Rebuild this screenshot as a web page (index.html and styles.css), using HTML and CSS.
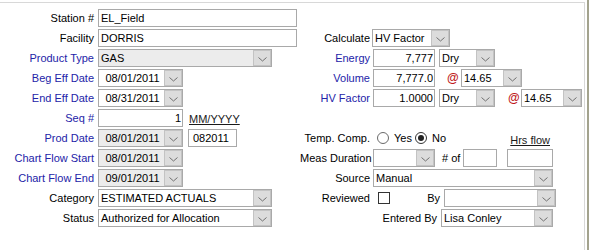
FILE: index.html
```html
<!DOCTYPE html>
<html>
<head>
<meta charset="utf-8">
<link rel="stylesheet" href="styles.css">
</head>
<body>
<div class="frame">
  <div class="panel">
    <div class="col left">
      <div class="row"><span class="lbl">Station #</span><div class="inp w199">EL_Field</div></div>
      <div class="row"><span class="lbl">Facility</span><div class="inp w199">DORRIS</div></div>
      <div class="row"><span class="lbl blue">Product Type</span><div class="sel w174 dis"><span class="val">GAS</span><span class="btn"><svg width="9" height="5" viewBox="0 0 9 5"><polyline points="0.5,0.5 4.5,4 8.5,0.5" fill="none" stroke="#707070"/></svg></span></div></div>
      <div class="row"><span class="lbl blue">Beg Eff Date</span><div class="sel w85 date"><span class="val">08/01/2011</span><span class="btn"><svg width="9" height="5" viewBox="0 0 9 5"><polyline points="0.5,0.5 4.5,4 8.5,0.5" fill="none" stroke="#707070"/></svg></span></div></div>
      <div class="row"><span class="lbl blue">End Eff Date</span><div class="sel w85 date"><span class="val">08/31/2011</span><span class="btn"><svg width="9" height="5" viewBox="0 0 9 5"><polyline points="0.5,0.5 4.5,4 8.5,0.5" fill="none" stroke="#707070"/></svg></span></div></div>
      <div class="row"><span class="lbl blue">Seq #</span><div class="inp w85 num">1</div><span class="ulink mm">MM/YYYY</span></div>
      <div class="row"><span class="lbl blue">Prod Date</span><div class="sel w85 date dis"><span class="val">08/01/2011</span><span class="btn"><svg width="9" height="5" viewBox="0 0 9 5"><polyline points="0.5,0.5 4.5,4 8.5,0.5" fill="none" stroke="#707070"/></svg></span></div><div class="inp w49 ml5 pad5">082011</div></div>
      <div class="row"><span class="lbl blue">Chart Flow Start</span><div class="sel w85 date dis"><span class="val">08/01/2011</span><span class="btn"><svg width="9" height="5" viewBox="0 0 9 5"><polyline points="0.5,0.5 4.5,4 8.5,0.5" fill="none" stroke="#707070"/></svg></span></div></div>
      <div class="row"><span class="lbl blue">Chart Flow End</span><div class="sel w85 date dis"><span class="val">09/01/2011</span><span class="btn"><svg width="9" height="5" viewBox="0 0 9 5"><polyline points="0.5,0.5 4.5,4 8.5,0.5" fill="none" stroke="#707070"/></svg></span></div></div>
      <div class="row"><span class="lbl">Category</span><div class="sel w174"><span class="val">ESTIMATED ACTUALS</span><span class="btn"><svg width="9" height="5" viewBox="0 0 9 5"><polyline points="0.5,0.5 4.5,4 8.5,0.5" fill="none" stroke="#707070"/></svg></span></div></div>
      <div class="row"><span class="lbl">Status</span><div class="sel w174"><span class="val">Authorized for Allocation</span><span class="btn"><svg width="9" height="5" viewBox="0 0 9 5"><polyline points="0.5,0.5 4.5,4 8.5,0.5" fill="none" stroke="#707070"/></svg></span></div></div>
    </div>
    <div class="col right">
      <div class="row"></div>
      <div class="row"><span class="lbl">Calculate</span><div class="sel w78 shift"><span class="val">HV Factor</span><span class="btn"><svg width="9" height="5" viewBox="0 0 9 5"><polyline points="0.5,0.5 4.5,4 8.5,0.5" fill="none" stroke="#707070"/></svg></span></div></div>
      <div class="row"><span class="lbl blue">Energy</span><div class="inp w62 num">7,777</div><div class="sel w56 ml4"><span class="val">Dry</span><span class="btn"><svg width="9" height="5" viewBox="0 0 9 5"><polyline points="0.5,0.5 4.5,4 8.5,0.5" fill="none" stroke="#707070"/></svg></span></div></div>
      <div class="row"><span class="lbl blue">Volume</span><div class="inp w62 num">7,777.0</div><span class="at at1">@</span><div class="sel w61"><span class="val">14.65</span><span class="btn"><svg width="9" height="5" viewBox="0 0 9 5"><polyline points="0.5,0.5 4.5,4 8.5,0.5" fill="none" stroke="#707070"/></svg></span></div></div>
      <div class="row"><span class="lbl blue">HV Factor</span><div class="inp w62 num">1.0000</div><div class="sel w56 ml4"><span class="val">Dry</span><span class="btn"><svg width="9" height="5" viewBox="0 0 9 5"><polyline points="0.5,0.5 4.5,4 8.5,0.5" fill="none" stroke="#707070"/></svg></span></div><span class="at at2">@</span><div class="sel w61"><span class="val">14.65</span><span class="btn"><svg width="9" height="5" viewBox="0 0 9 5"><polyline points="0.5,0.5 4.5,4 8.5,0.5" fill="none" stroke="#707070"/></svg></span></div></div>
      <div class="row"></div>
      <div class="row"><span class="lbl">Temp. Comp.</span>
        <div class="radios"><span class="radio"></span><span class="rtxt">Yes</span><span class="radio on"></span><span class="rtxt">No</span></div>
        <span class="ulink hrs">Hrs flow</span>
      </div>
      <div class="row"><span class="lbl">Meas Duration</span><div class="sel w62"><span class="val"></span><span class="btn"><svg width="9" height="5" viewBox="0 0 9 5"><polyline points="0.5,0.5 4.5,4 8.5,0.5" fill="none" stroke="#707070"/></svg></span></div><span class="numof">#&nbsp;of</span><div class="inp w34"></div><div class="inp w46 ml10"></div></div>
      <div class="row"><span class="lbl">Source</span><div class="sel w180"><span class="val">Manual</span><span class="btn"><svg width="9" height="5" viewBox="0 0 9 5"><polyline points="0.5,0.5 4.5,4 8.5,0.5" fill="none" stroke="#707070"/></svg></span></div></div>
      <div class="row"><span class="lbl">Reviewed</span><span class="check"></span><span class="lbl2">By</span><div class="sel w112"><span class="val"></span><span class="btn"><svg width="9" height="5" viewBox="0 0 9 5"><polyline points="0.5,0.5 4.5,4 8.5,0.5" fill="none" stroke="#707070"/></svg></span></div></div>
      <div class="row"><span class="lbl wide">Entered By</span><div class="sel w112"><span class="val">Lisa Conley</span><span class="btn"><svg width="9" height="5" viewBox="0 0 9 5"><polyline points="0.5,0.5 4.5,4 8.5,0.5" fill="none" stroke="#707070"/></svg></span></div></div>
    </div>
  </div>
  <div class="edge"></div>
</div>
</body>
</html>
```
FILE: styles.css
```css
* { box-sizing: border-box; }
html, body { margin: 0; padding: 0; background: #fff; }
body {
  font-family: "Liberation Sans", Arial, sans-serif;
  font-size: 11px;
  color: #000;
}
.frame { display: flex; height: 250px; }
.panel {
  width: 585px;
  margin-top: 2px;
  border-top: 1px solid #d8d8d8;
  border-right: 1px solid #d8d8d8;
  padding-top: 5px;
  display: flex;
}
.edge { width: 2px; margin-left: 2px; background: #a3a38e; }
.col { display: flex; flex-direction: column; }
.left { width: 300px; }
.right { width: 284px; }
.row { display: flex; align-items: center; height: 20px; white-space: nowrap; }
.lbl { text-align: right; flex: none; }
.left .lbl { width: 94px; margin-right: 4px; }
.right .lbl { width: 70px; margin-right: 3px; }
.right .lbl.wide { width: 137px; margin-right: 4px; }
.blue { color: #2323a8; }

.inp {
  height: 18px;
  border: 1px solid #a9a9a9;
  background: #fff;
  padding: 0 2px;
  line-height: 16px;
  flex: none;
  overflow: hidden;
}
.inp.num { text-align: right; padding-right: 1px; }
.inp.pad5 { padding-left: 4px; }

.sel {
  height: 18px;
  border: 1px solid #a9a9a9;
  background: #fff;
  display: flex;
  flex: none;
  overflow: hidden;
}
.sel.dis { background: #ececec; }
.sel .val { flex: 1; padding-left: 2px; line-height: 16px; overflow: hidden; }
.sel.date .val { text-align: center; }
.sel .btn {
  width: 18px;
  flex: none;
  background: #dcdcdc;
  border: 1px solid #c3c3c3;
  display: flex;
  align-items: center;
  justify-content: center;
  padding-top: 3px;
}
.sel .btn svg { display: block; }
.sel.shift { margin-left: -1px; }

.w199 { width: 199px; }
.w174 { width: 174px; }
.w85 { width: 85px; }
.w49 { width: 49px; }
.w78 { width: 78px; }
.w62 { width: 62px; }
.w56 { width: 56px; }
.w61 { width: 61px; }
.w34 { width: 34px; }
.w46 { width: 46px; }
.w180 { width: 180px; }
.w112 { width: 112px; }
.ml4 { margin-left: 4px; }
.ml5 { margin-left: 5px; }
.ml10 { margin-left: 10px; }

.ulink { text-decoration: underline; color: #1a1a1a; align-self: flex-end; }
.mm { margin-left: 6px; padding-bottom: 3px; }
.hrs { margin-left: auto; margin-right: 34px; padding-bottom: 2px; }

.at { color: #c01a1a; font-weight: bold; font-size: 12px; flex: none; }
.at1 { margin-left: 12px; width: 14px; }
.at2 { margin-left: 13px; width: 13px; }

.radios { display: flex; align-items: center; }
.radio {
  width: 12px; height: 12px;
  border: 1px solid #6a6a6a;
  border-radius: 50%;
  background: #fff;
  margin-left: 4px;
  position: relative;
  flex: none;
}
.radio.on { border-color: #333; }
.radio.on::after {
  content: "";
  position: absolute;
  left: 2px; top: 2px;
  width: 6px; height: 6px;
  border-radius: 50%;
  background: #222;
}
.rtxt { margin-left: 5px; }
.rtxt + .radio { margin-left: 3px; }

.numof { margin-left: 7px; width: 21px; flex: none; }

.check {
  width: 12px; height: 12px;
  border: 1px solid #333;
  background: #fff;
  margin-left: 5px;
  flex: none;
}
.lbl2 { width: 50px; text-align: right; margin-right: 4px; flex: none; }
```
